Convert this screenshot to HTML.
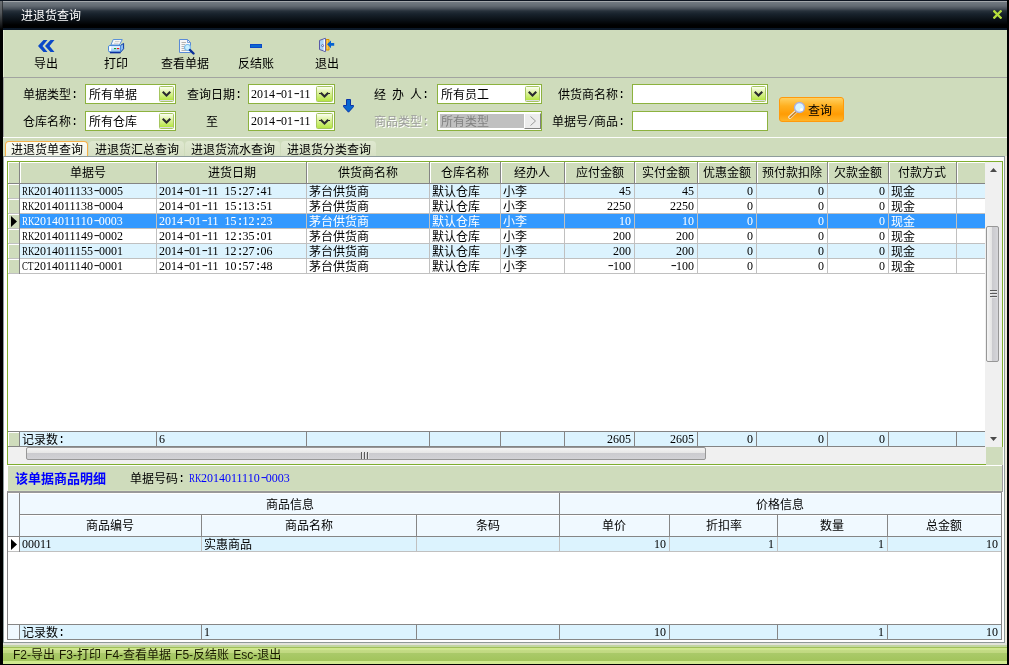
<!DOCTYPE html><html><head><meta charset="utf-8"><title>进退货查询</title><style>
html,body{margin:0;padding:0}
body{width:1009px;height:665px;overflow:hidden;background:#000;position:relative;font:12px/12px "Liberation Sans","Noto Sans CJK SC",sans-serif;color:#000}
div,span{box-sizing:border-box}
.a{position:absolute}
.m{font-family:"Liberation Mono","Noto Sans CJK SC",monospace;letter-spacing:-1.2px;position:relative;top:-1px}
.d{font-family:"Liberation Serif","Noto Sans CJK SC",serif;position:relative;top:-1px}
.c{display:inline-block;width:6px;height:12px;vertical-align:top;font-family:"Liberation Serif","Noto Sans CJK SC",serif;transform:scaleX(.74);transform-origin:0 50%;position:relative;top:-1px}
.h{display:inline-block;width:6px;height:12px;vertical-align:top;font-family:"Liberation Mono",monospace;letter-spacing:-1.2px;transform:scaleX(1.4);transform-origin:50% 50%;position:relative;top:-1px}
.t{position:absolute;white-space:nowrap;height:12px;line-height:12px}
.cb{position:absolute;height:20px;border:1px solid #8cb23e;background:#fff}
.dd{position:absolute;top:1px;right:1px;width:15px;height:16px;border:1px solid #a6c660;border-radius:1.5px;background:linear-gradient(#fbfef0,#dcf29c 6px,#b6e644 13px,#dcdce2 13px)}
.hl{position:absolute;height:1px}
.vl{position:absolute;width:1px}
</style></head><body><div class="a" style="left:0;top:0;width:1009px;height:665px;will-change:transform">
<div class="a" style="left:0;top:0;width:1009px;height:30px;background:linear-gradient(#0c1420 0,#0c1420 1px,#a2a6aa 1px,#a2a6aa 2px,#727a82 2px,#626a72 6px,#444c56 9px,#26303a 11px,#18222c 14px,#0a1016 20px,#000 25px,#000 28px,#0a1726 28px,#0b1828 30px)"></div>
<div class="a" style="left:0;top:1px;width:2px;height:29px;background:linear-gradient(#6c7074,#54585c 40%,#1c1e20 80%,#000)"></div><div class="a" style="left:2px;top:1px;width:1px;height:29px;background:linear-gradient(#3c4044,#202428 50%,#000)"></div>
<div class="a" style="left:1007px;top:0;width:2px;height:30px;background:#000"></div>
<div class="t" style="left:21px;top:10px;color:#fff">进退货查询</div>
<svg class="a" style="left:993px;top:10px" width="9" height="9" viewBox="0 0 9 9"><path d="M1.3 1.3 L7.7 7.7 M7.7 1.3 L1.3 7.7" stroke="#b6de3c" stroke-width="2.3" stroke-linecap="square"/></svg>
<div class="a" style="left:3px;top:30px;width:1004px;height:634px;background:#cfdcbc"></div>
<div class="a" style="left:3px;top:30px;width:1px;height:47px;background:#e2ead2"></div>
<div class="t" style="left:34px;top:58px">导出</div>
<svg class="a" style="left:38px;top:40px" width="17" height="12" viewBox="0 0 17 12"><path d="M0 6 L5.5 0 H9.5 L4.5 6 L9.5 12 H5.5Z M7 6 L12.5 0 H16.5 L11.5 6 L16.5 12 H12.5Z" fill="#0a48c8"/></svg>
<div class="t" style="left:104px;top:58px">打印</div>
<svg class="a" style="left:108px;top:39px" width="17" height="15" viewBox="0 0 17 15"><path d="M5.2 0.5 H14.3 L11.4 6 H2.9Z" fill="#f7f7f7" stroke="#5a90d8" stroke-width="1"/><path d="M7 2.5 H11.5 M6 4.3 H10.5" stroke="#c4c4c4" stroke-width="0.8"/><path d="M12.5 6.5 L15.6 4.4 V9.8 L12.5 13.3Z" fill="#8cbcf0" stroke="#0a3aa8" stroke-width="1"/><path d="M0.5 8 Q0.5 6.5 2 6.5 H12.5 V13 H2 Q0.5 13 0.5 11.5Z" fill="#a4ccf4" stroke="#4a88d8" stroke-width="1"/><path d="M1.2 7.2 H12 V9 H1.2Z" fill="#e2f0ff"/><path d="M1.2 9 H12 V10.4 H1.2Z" fill="#c4defa"/><rect x="1.2" y="7.4" width="1.8" height="4.6" fill="#fff"/><path d="M2 13.6 H12.6" stroke="#0a30a0" stroke-width="1.5"/><rect x="6" y="9" width="2.2" height="1.1" fill="#10a428"/><rect x="9" y="9" width="2.2" height="1.1" fill="#e81818"/></svg>
<div class="t" style="left:161px;top:58px">查看单据</div>
<svg class="a" style="left:179px;top:39px" width="16" height="16" viewBox="0 0 16 16"><path d="M0.5 0.5 H8.5 L11.5 3.5 V13.5 H0.5Z" fill="#f8f8f8" stroke="#5a8ad6"/><path d="M8.5 0.5 V3.5 H11.5" fill="none" stroke="#5a8ad6" stroke-width="0.8"/><path d="M2.5 3.5 H7 M2.5 5.5 H6 M2.5 7.5 H5 M2.5 9.5 H5 M2.5 11.5 H8" stroke="#b4b4b4" stroke-width="1"/><circle cx="8.5" cy="8.5" r="3" fill="#c8f0ff" stroke="#7ab8e8" stroke-width="1.2"/><path d="M11 11 L14.5 14.5" stroke="#0a3098" stroke-width="2.4" stroke-linecap="round"/></svg>
<div class="t" style="left:238px;top:58px">反结账</div>
<div class="a" style="left:250px;top:44px;width:12px;height:4px;background:#0a68d0;border:1px solid #0a48c8"></div>
<div class="t" style="left:315px;top:58px">退出</div>
<svg class="a" style="left:318px;top:37px" width="18" height="16" viewBox="0 0 18 16"><path d="M8 2.5 H11 V13 H8Z" fill="#f8c850" stroke="#d89000" stroke-width="1"/><path d="M1.5 3.4 L7.4 1.3 V14.6 L1.5 12.5Z" fill="#a8d4f8" stroke="#5858a8" stroke-width="1"/><path d="M6.3 2.2 V13.8" stroke="#fff" stroke-width="1.3"/><circle cx="4.6" cy="8.6" r="1" fill="#fff" stroke="#404088" stroke-width="0.7"/><path d="M9 7.3 L13 3.5 V6 H16.2 V8.8 H13 V11.2Z" fill="#0462d2"/></svg>
<div class="hl" style="left:3px;top:77px;width:1004px;background:#a2a4a0"></div>
<div class="vl" style="left:3px;top:77px;height:60px;background:#a2a4a0"></div>
<div class="hl" style="left:3px;top:137px;width:1004px;background:#fcfdfa"></div>
<div class="t" style="left:23px;top:89px;">单据类型<span class="m">:</span></div>
<div class="t" style="left:23px;top:116px;">仓库名称<span class="m">:</span></div>
<div class="t" style="left:187px;top:89px;">查询日期<span class="m">:</span></div>
<div class="t" style="left:206px;top:116px;">至</div>
<div class="t" style="left:374px;top:89px;">经<span class="m">&nbsp;</span>办<span class="m">&nbsp;</span>人<span class="m">:</span></div>
<div class="t" style="left:374px;top:116px;color:#9c9c9c;text-shadow:1px 1px 0 #fff">商品类型<span class="m">:</span></div>
<div class="t" style="left:558px;top:89px;">供货商名称<span class="m">:</span></div>
<div class="t" style="left:552px;top:116px;">单据号<span class="m">/</span>商品<span class="m">:</span></div>
<div class="cb" style="left:85px;top:84px;width:91px">
<div class="t" style="left:3px;top:4px">所有单据</div>
<div class="dd"><svg class="a" style="left:2px;top:4px" width="9" height="6" viewBox="0 0 9 6"><path d="M0 1.5 L1.5 0 L4.5 3 L7.5 0 L9 1.5 L4.5 6Z" fill="#2a2a30"/></svg></div>
</div>
<div class="cb" style="left:85px;top:111px;width:91px">
<div class="t" style="left:3px;top:4px">所有仓库</div>
<div class="dd"><svg class="a" style="left:2px;top:4px" width="9" height="6" viewBox="0 0 9 6"><path d="M0 1.5 L1.5 0 L4.5 3 L7.5 0 L9 1.5 L4.5 6Z" fill="#2a2a30"/></svg></div>
</div>
<div class="cb" style="left:248px;top:84px;width:87px">
<div class="t" style="left:2px;top:4px"><span class="d">2014</span><span class="h">-</span><span class="d">01</span><span class="h">-</span><span class="d">11</span></div>
<div class="dd" style="width:17px;background:linear-gradient(#fbfef0,#dcf29c 6px,#b6e644 14px)"><svg class="a" style="left:2px;top:5px" width="11" height="6" viewBox="0 0 11 6"><path d="M0 1 H1.5 L2.5 0 L5.5 3 L8.5 0 L9.5 1 H11 V2 H9.5 L5.5 6 L1.5 2 H0Z" fill="#2a2a30"/></svg></div>
</div>
<div class="cb" style="left:248px;top:111px;width:87px">
<div class="t" style="left:2px;top:4px"><span class="d">2014</span><span class="h">-</span><span class="d">01</span><span class="h">-</span><span class="d">11</span></div>
<div class="dd" style="width:17px;background:linear-gradient(#fbfef0,#dcf29c 6px,#b6e644 14px)"><svg class="a" style="left:2px;top:5px" width="11" height="6" viewBox="0 0 11 6"><path d="M0 1 H1.5 L2.5 0 L5.5 3 L8.5 0 L9.5 1 H11 V2 H9.5 L5.5 6 L1.5 2 H0Z" fill="#2a2a30"/></svg></div>
</div>
<div class="cb" style="left:437px;top:84px;width:105px">
<div class="t" style="left:3px;top:4px">所有员工</div>
<div class="dd"><svg class="a" style="left:2px;top:4px" width="9" height="6" viewBox="0 0 9 6"><path d="M0 1.5 L1.5 0 L4.5 3 L7.5 0 L9 1.5 L4.5 6Z" fill="#2a2a30"/></svg></div>
</div>
<div class="cb" style="left:632px;top:84px;width:136px">
<div class="dd"><svg class="a" style="left:2px;top:4px" width="9" height="6" viewBox="0 0 9 6"><path d="M0 1.5 L1.5 0 L4.5 3 L7.5 0 L9 1.5 L4.5 6Z" fill="#2a2a30"/></svg></div>
</div>
<div class="cb" style="left:632px;top:111px;width:136px">
</div>
<div class="cb" style="left:437px;top:111px;width:105px"><div class="a" style="left:2px;top:2px;width:85px;height:14px;background:#c0c0c0"></div><div class="t" style="left:3px;top:4px;color:#808080">所有类型</div><div class="a" style="left:86px;top:1px;width:17px;height:16px;background:#ececec;border:1px solid;border-color:#fff #808080 #808080 #fff"><svg class="a" style="left:4px;top:2px" width="8" height="10" viewBox="0 0 8 10"><path d="M1.5 0.5 L6.5 5 L1.5 9.5" stroke="#9a9a9a" stroke-width="1" fill="none"/></svg></div></div>
<svg class="a" style="left:343px;top:99px" width="11" height="14" viewBox="0 0 11 14"><path d="M3.5 0.5 H7.5 V6.5 H10.5 V7.7 L5.5 13.2 L0.5 7.7 V6.5 H3.5Z" fill="#0868d0" stroke="#0a34a8" stroke-width="1"/></svg>
<div class="a" style="left:779px;top:97px;width:65px;height:25px;border:1px solid #ff9a0c;border-radius:3px;background:linear-gradient(#ffd060,#ffb020 35%,#ff9c04 70%,#ffb428)"><svg class="a" style="left:8px;top:3px" width="18" height="18" viewBox="0 0 18 18"><path d="M8 10.5 L1.8 16.2" stroke="#f4ecd8" stroke-width="3.2" stroke-linecap="round"/><path d="M8 10.8 L2 16.3" stroke="#c8842c" stroke-width="1.6" stroke-linecap="round"/><circle cx="11.5" cy="6.5" r="5" fill="#d8f4ff" stroke="#a8b0e0" stroke-width="1.3"/><circle cx="13.5" cy="8.5" r="1.6" fill="#fff"/></svg><div class="t" style="left:28px;top:7px">查询</div></div>
<div class="a" style="left:5px;top:141px;width:83px;height:16px;border:1px solid #f6b04a;border-bottom:0;border-radius:4px 4px 0 0;background:linear-gradient(#fafcf4,#eef2e4)"></div>
<div class="t" style="left:11px;top:144px">进退货单查询</div>
<div class="a" style="left:89px;top:141px;width:95px;height:15px;border-radius:4px 4px 0 0;background:linear-gradient(#dfe8d0,#d6e0c4)"></div>
<div class="t" style="left:95px;top:144px">进退货汇总查询</div>
<div class="a" style="left:185px;top:141px;width:95px;height:15px;border-radius:4px 4px 0 0;background:linear-gradient(#dfe8d0,#d6e0c4)"></div>
<div class="t" style="left:191px;top:144px">进退货流水查询</div>
<div class="a" style="left:281px;top:141px;width:95px;height:15px;border-radius:4px 4px 0 0;background:linear-gradient(#dfe8d0,#d6e0c4)"></div>
<div class="t" style="left:287px;top:144px">进退货分类查询</div>
<div class="a" style="left:3px;top:156px;width:1002px;height:487px;background:#fff;border:1px solid #8e9c9c;border-bottom-color:#8e9898"></div>
<div class="a" style="left:1005px;top:156px;width:2px;height:487px;background:#ece8d8"></div>
<div class="a" style="left:3px;top:643px;width:1004px;height:2px;background:#e2e2da"></div>
<div class="a" style="left:3px;top:645px;width:1004px;height:2px;background:#c2d6a2"></div>
<div class="a" style="left:3px;top:647px;width:1004px;height:17px;background:linear-gradient(#a0c058 0,#a0c058 1px,#d0e890 1px,#cce48c 3px,#c4dc86 3px,#c0d880 6px,#aaca6a 6px,#a2c45c 14px,#d0ea90 14px,#d0ea90 17px)"></div>
<div class="t" style="left:13px;top:649px;word-spacing:0.7px;font-family:'Liberation Sans','Noto Sans CJK SC',sans-serif;color:#1a1a00">F2-导出 F3-打印 F4-查看单据 F5-反结账 Esc-退出</div>
<div class="a" style="left:7px;top:161px;width:996px;height:304px;border:1px solid #7fae2e;background:#fff"></div>
<div class="a" style="left:8px;top:162px;width:977px;height:21px;background:#cfdcbc"></div>
<div class="hl" style="left:8px;top:162px;width:977px;background:#fff"></div>
<div class="hl" style="left:8px;top:183px;width:977px;background:#848484"></div>
<div class="vl" style="left:8px;top:162px;height:21px;background:#fff"></div>
<div class="vl" style="left:20px;top:162px;height:21px;background:#fff"></div>
<div class="vl" style="left:157px;top:162px;height:21px;background:#fff"></div>
<div class="vl" style="left:307px;top:162px;height:21px;background:#fff"></div>
<div class="vl" style="left:430px;top:162px;height:21px;background:#fff"></div>
<div class="vl" style="left:501px;top:162px;height:21px;background:#fff"></div>
<div class="vl" style="left:565px;top:162px;height:21px;background:#fff"></div>
<div class="vl" style="left:635px;top:162px;height:21px;background:#fff"></div>
<div class="vl" style="left:698px;top:162px;height:21px;background:#fff"></div>
<div class="vl" style="left:757px;top:162px;height:21px;background:#fff"></div>
<div class="vl" style="left:828px;top:162px;height:21px;background:#fff"></div>
<div class="vl" style="left:889px;top:162px;height:21px;background:#fff"></div>
<div class="vl" style="left:957px;top:162px;height:21px;background:#fff"></div>
<div class="vl" style="left:19px;top:162px;height:22px;background:#848484"></div>
<div class="vl" style="left:156px;top:162px;height:22px;background:#848484"></div>
<div class="vl" style="left:306px;top:162px;height:22px;background:#848484"></div>
<div class="vl" style="left:429px;top:162px;height:22px;background:#848484"></div>
<div class="vl" style="left:500px;top:162px;height:22px;background:#848484"></div>
<div class="vl" style="left:564px;top:162px;height:22px;background:#848484"></div>
<div class="vl" style="left:634px;top:162px;height:22px;background:#848484"></div>
<div class="vl" style="left:697px;top:162px;height:22px;background:#848484"></div>
<div class="vl" style="left:756px;top:162px;height:22px;background:#848484"></div>
<div class="vl" style="left:827px;top:162px;height:22px;background:#848484"></div>
<div class="vl" style="left:888px;top:162px;height:22px;background:#848484"></div>
<div class="vl" style="left:956px;top:162px;height:22px;background:#848484"></div>
<div class="t" style="left:70px;top:167px">单据号</div>
<div class="t" style="left:208px;top:167px">进货日期</div>
<div class="t" style="left:338px;top:167px">供货商名称</div>
<div class="t" style="left:441px;top:167px">仓库名称</div>
<div class="t" style="left:514px;top:167px">经办人</div>
<div class="t" style="left:576px;top:167px">应付金额</div>
<div class="t" style="left:642px;top:167px">实付金额</div>
<div class="t" style="left:703px;top:167px">优惠金额</div>
<div class="t" style="left:762px;top:167px">预付款扣除</div>
<div class="t" style="left:834px;top:167px">欠款金额</div>
<div class="t" style="left:898px;top:167px">付款方式</div>
<div class="a" style="left:8px;top:184px;width:11px;height:14px;background:#cfdcbc;border-top:1px solid #fff;border-left:1px solid #fff"></div>
<div class="a" style="left:20px;top:184px;width:965px;height:14px;background:#dcf3fe"></div>
<div class="hl" style="left:8px;top:198px;width:977px;background:#c0c0c0"></div>
<div class="vl" style="left:19px;top:184px;height:15px;background:#848484"></div>
<div class="vl" style="left:156px;top:184px;height:15px;background:#c0c0c0"></div>
<div class="vl" style="left:306px;top:184px;height:15px;background:#c0c0c0"></div>
<div class="vl" style="left:429px;top:184px;height:15px;background:#c0c0c0"></div>
<div class="vl" style="left:500px;top:184px;height:15px;background:#c0c0c0"></div>
<div class="vl" style="left:564px;top:184px;height:15px;background:#c0c0c0"></div>
<div class="vl" style="left:634px;top:184px;height:15px;background:#c0c0c0"></div>
<div class="vl" style="left:697px;top:184px;height:15px;background:#c0c0c0"></div>
<div class="vl" style="left:756px;top:184px;height:15px;background:#c0c0c0"></div>
<div class="vl" style="left:827px;top:184px;height:15px;background:#c0c0c0"></div>
<div class="vl" style="left:888px;top:184px;height:15px;background:#c0c0c0"></div>
<div class="vl" style="left:956px;top:184px;height:15px;background:#c0c0c0"></div>
<div class="t" style="left:22px;top:186px;color:#000"><span class="c">R</span><span class="c">K</span><span class="d">2014011133</span><span class="h">-</span><span class="d">0005</span></div>
<div class="t" style="left:159px;top:186px;color:#000"><span class="d">2014</span><span class="h">-</span><span class="d">01</span><span class="h">-</span><span class="d">11</span><span class="m">&nbsp;</span><span class="d">15</span><span class="m">:</span><span class="d">27</span><span class="m">:</span><span class="d">41</span></div>
<div class="t" style="left:309px;top:186px;color:#000">茅台供货商</div>
<div class="t" style="left:432px;top:186px;color:#000">默认仓库</div>
<div class="t" style="left:503px;top:186px;color:#000">小李</div>
<div class="t" style="right:378px;top:186px;color:#000"><span class="d">45</span></div>
<div class="t" style="right:315px;top:186px;color:#000"><span class="d">45</span></div>
<div class="t" style="right:256px;top:186px;color:#000"><span class="d">0</span></div>
<div class="t" style="right:185px;top:186px;color:#000"><span class="d">0</span></div>
<div class="t" style="right:124px;top:186px;color:#000"><span class="d">0</span></div>
<div class="t" style="left:891px;top:186px;color:#000">现金</div>
<div class="a" style="left:8px;top:199px;width:11px;height:14px;background:#cfdcbc;border-top:1px solid #fff;border-left:1px solid #fff"></div>
<div class="a" style="left:20px;top:199px;width:965px;height:14px;background:#fff"></div>
<div class="hl" style="left:8px;top:213px;width:977px;background:#c0c0c0"></div>
<div class="vl" style="left:19px;top:199px;height:15px;background:#848484"></div>
<div class="vl" style="left:156px;top:199px;height:15px;background:#c0c0c0"></div>
<div class="vl" style="left:306px;top:199px;height:15px;background:#c0c0c0"></div>
<div class="vl" style="left:429px;top:199px;height:15px;background:#c0c0c0"></div>
<div class="vl" style="left:500px;top:199px;height:15px;background:#c0c0c0"></div>
<div class="vl" style="left:564px;top:199px;height:15px;background:#c0c0c0"></div>
<div class="vl" style="left:634px;top:199px;height:15px;background:#c0c0c0"></div>
<div class="vl" style="left:697px;top:199px;height:15px;background:#c0c0c0"></div>
<div class="vl" style="left:756px;top:199px;height:15px;background:#c0c0c0"></div>
<div class="vl" style="left:827px;top:199px;height:15px;background:#c0c0c0"></div>
<div class="vl" style="left:888px;top:199px;height:15px;background:#c0c0c0"></div>
<div class="vl" style="left:956px;top:199px;height:15px;background:#c0c0c0"></div>
<div class="t" style="left:22px;top:201px;color:#000"><span class="c">R</span><span class="c">K</span><span class="d">2014011138</span><span class="h">-</span><span class="d">0004</span></div>
<div class="t" style="left:159px;top:201px;color:#000"><span class="d">2014</span><span class="h">-</span><span class="d">01</span><span class="h">-</span><span class="d">11</span><span class="m">&nbsp;</span><span class="d">15</span><span class="m">:</span><span class="d">13</span><span class="m">:</span><span class="d">51</span></div>
<div class="t" style="left:309px;top:201px;color:#000">茅台供货商</div>
<div class="t" style="left:432px;top:201px;color:#000">默认仓库</div>
<div class="t" style="left:503px;top:201px;color:#000">小李</div>
<div class="t" style="right:378px;top:201px;color:#000"><span class="d">2250</span></div>
<div class="t" style="right:315px;top:201px;color:#000"><span class="d">2250</span></div>
<div class="t" style="right:256px;top:201px;color:#000"><span class="d">0</span></div>
<div class="t" style="right:185px;top:201px;color:#000"><span class="d">0</span></div>
<div class="t" style="right:124px;top:201px;color:#000"><span class="d">0</span></div>
<div class="t" style="left:891px;top:201px;color:#000">现金</div>
<div class="a" style="left:8px;top:214px;width:11px;height:14px;background:#cfdcbc;border-top:1px solid #fff;border-left:1px solid #fff"></div>
<svg class="a" style="left:11px;top:216px" width="7" height="11" viewBox="0 0 7 11"><path d="M0 0 L6 5.5 L0 11Z" fill="#000"/></svg>
<div class="a" style="left:20px;top:214px;width:965px;height:14px;background:#3399ff"></div>
<div class="hl" style="left:8px;top:228px;width:977px;background:#c0c0c0"></div>
<div class="vl" style="left:19px;top:214px;height:15px;background:#848484"></div>
<div class="vl" style="left:156px;top:214px;height:15px;background:#c0c0c0"></div>
<div class="vl" style="left:306px;top:214px;height:15px;background:#c0c0c0"></div>
<div class="vl" style="left:429px;top:214px;height:15px;background:#c0c0c0"></div>
<div class="vl" style="left:500px;top:214px;height:15px;background:#c0c0c0"></div>
<div class="vl" style="left:564px;top:214px;height:15px;background:#c0c0c0"></div>
<div class="vl" style="left:634px;top:214px;height:15px;background:#c0c0c0"></div>
<div class="vl" style="left:697px;top:214px;height:15px;background:#c0c0c0"></div>
<div class="vl" style="left:756px;top:214px;height:15px;background:#c0c0c0"></div>
<div class="vl" style="left:827px;top:214px;height:15px;background:#c0c0c0"></div>
<div class="vl" style="left:888px;top:214px;height:15px;background:#c0c0c0"></div>
<div class="vl" style="left:956px;top:214px;height:15px;background:#c0c0c0"></div>
<div class="t" style="left:22px;top:216px;color:#fff"><span class="c">R</span><span class="c">K</span><span class="d">2014011110</span><span class="h">-</span><span class="d">0003</span></div>
<div class="t" style="left:159px;top:216px;color:#fff"><span class="d">2014</span><span class="h">-</span><span class="d">01</span><span class="h">-</span><span class="d">11</span><span class="m">&nbsp;</span><span class="d">15</span><span class="m">:</span><span class="d">12</span><span class="m">:</span><span class="d">23</span></div>
<div class="t" style="left:309px;top:216px;color:#fff">茅台供货商</div>
<div class="t" style="left:432px;top:216px;color:#fff">默认仓库</div>
<div class="t" style="left:503px;top:216px;color:#fff">小李</div>
<div class="t" style="right:378px;top:216px;color:#fff"><span class="d">10</span></div>
<div class="t" style="right:315px;top:216px;color:#fff"><span class="d">10</span></div>
<div class="t" style="right:256px;top:216px;color:#fff"><span class="d">0</span></div>
<div class="t" style="right:185px;top:216px;color:#fff"><span class="d">0</span></div>
<div class="t" style="right:124px;top:216px;color:#fff"><span class="d">0</span></div>
<div class="t" style="left:891px;top:216px;color:#fff">现金</div>
<div class="a" style="left:8px;top:229px;width:11px;height:14px;background:#cfdcbc;border-top:1px solid #fff;border-left:1px solid #fff"></div>
<div class="a" style="left:20px;top:229px;width:965px;height:14px;background:#fff"></div>
<div class="hl" style="left:8px;top:243px;width:977px;background:#c0c0c0"></div>
<div class="vl" style="left:19px;top:229px;height:15px;background:#848484"></div>
<div class="vl" style="left:156px;top:229px;height:15px;background:#c0c0c0"></div>
<div class="vl" style="left:306px;top:229px;height:15px;background:#c0c0c0"></div>
<div class="vl" style="left:429px;top:229px;height:15px;background:#c0c0c0"></div>
<div class="vl" style="left:500px;top:229px;height:15px;background:#c0c0c0"></div>
<div class="vl" style="left:564px;top:229px;height:15px;background:#c0c0c0"></div>
<div class="vl" style="left:634px;top:229px;height:15px;background:#c0c0c0"></div>
<div class="vl" style="left:697px;top:229px;height:15px;background:#c0c0c0"></div>
<div class="vl" style="left:756px;top:229px;height:15px;background:#c0c0c0"></div>
<div class="vl" style="left:827px;top:229px;height:15px;background:#c0c0c0"></div>
<div class="vl" style="left:888px;top:229px;height:15px;background:#c0c0c0"></div>
<div class="vl" style="left:956px;top:229px;height:15px;background:#c0c0c0"></div>
<div class="t" style="left:22px;top:231px;color:#000"><span class="c">R</span><span class="c">K</span><span class="d">2014011149</span><span class="h">-</span><span class="d">0002</span></div>
<div class="t" style="left:159px;top:231px;color:#000"><span class="d">2014</span><span class="h">-</span><span class="d">01</span><span class="h">-</span><span class="d">11</span><span class="m">&nbsp;</span><span class="d">12</span><span class="m">:</span><span class="d">35</span><span class="m">:</span><span class="d">01</span></div>
<div class="t" style="left:309px;top:231px;color:#000">茅台供货商</div>
<div class="t" style="left:432px;top:231px;color:#000">默认仓库</div>
<div class="t" style="left:503px;top:231px;color:#000">小李</div>
<div class="t" style="right:378px;top:231px;color:#000"><span class="d">200</span></div>
<div class="t" style="right:315px;top:231px;color:#000"><span class="d">200</span></div>
<div class="t" style="right:256px;top:231px;color:#000"><span class="d">0</span></div>
<div class="t" style="right:185px;top:231px;color:#000"><span class="d">0</span></div>
<div class="t" style="right:124px;top:231px;color:#000"><span class="d">0</span></div>
<div class="t" style="left:891px;top:231px;color:#000">现金</div>
<div class="a" style="left:8px;top:244px;width:11px;height:14px;background:#cfdcbc;border-top:1px solid #fff;border-left:1px solid #fff"></div>
<div class="a" style="left:20px;top:244px;width:965px;height:14px;background:#dcf3fe"></div>
<div class="hl" style="left:8px;top:258px;width:977px;background:#c0c0c0"></div>
<div class="vl" style="left:19px;top:244px;height:15px;background:#848484"></div>
<div class="vl" style="left:156px;top:244px;height:15px;background:#c0c0c0"></div>
<div class="vl" style="left:306px;top:244px;height:15px;background:#c0c0c0"></div>
<div class="vl" style="left:429px;top:244px;height:15px;background:#c0c0c0"></div>
<div class="vl" style="left:500px;top:244px;height:15px;background:#c0c0c0"></div>
<div class="vl" style="left:564px;top:244px;height:15px;background:#c0c0c0"></div>
<div class="vl" style="left:634px;top:244px;height:15px;background:#c0c0c0"></div>
<div class="vl" style="left:697px;top:244px;height:15px;background:#c0c0c0"></div>
<div class="vl" style="left:756px;top:244px;height:15px;background:#c0c0c0"></div>
<div class="vl" style="left:827px;top:244px;height:15px;background:#c0c0c0"></div>
<div class="vl" style="left:888px;top:244px;height:15px;background:#c0c0c0"></div>
<div class="vl" style="left:956px;top:244px;height:15px;background:#c0c0c0"></div>
<div class="t" style="left:22px;top:246px;color:#000"><span class="c">R</span><span class="c">K</span><span class="d">2014011155</span><span class="h">-</span><span class="d">0001</span></div>
<div class="t" style="left:159px;top:246px;color:#000"><span class="d">2014</span><span class="h">-</span><span class="d">01</span><span class="h">-</span><span class="d">11</span><span class="m">&nbsp;</span><span class="d">12</span><span class="m">:</span><span class="d">27</span><span class="m">:</span><span class="d">06</span></div>
<div class="t" style="left:309px;top:246px;color:#000">茅台供货商</div>
<div class="t" style="left:432px;top:246px;color:#000">默认仓库</div>
<div class="t" style="left:503px;top:246px;color:#000">小李</div>
<div class="t" style="right:378px;top:246px;color:#000"><span class="d">200</span></div>
<div class="t" style="right:315px;top:246px;color:#000"><span class="d">200</span></div>
<div class="t" style="right:256px;top:246px;color:#000"><span class="d">0</span></div>
<div class="t" style="right:185px;top:246px;color:#000"><span class="d">0</span></div>
<div class="t" style="right:124px;top:246px;color:#000"><span class="d">0</span></div>
<div class="t" style="left:891px;top:246px;color:#000">现金</div>
<div class="a" style="left:8px;top:259px;width:11px;height:14px;background:#cfdcbc;border-top:1px solid #fff;border-left:1px solid #fff"></div>
<div class="a" style="left:20px;top:259px;width:965px;height:14px;background:#fff"></div>
<div class="hl" style="left:8px;top:273px;width:977px;background:#c0c0c0"></div>
<div class="vl" style="left:19px;top:259px;height:15px;background:#848484"></div>
<div class="vl" style="left:156px;top:259px;height:15px;background:#c0c0c0"></div>
<div class="vl" style="left:306px;top:259px;height:15px;background:#c0c0c0"></div>
<div class="vl" style="left:429px;top:259px;height:15px;background:#c0c0c0"></div>
<div class="vl" style="left:500px;top:259px;height:15px;background:#c0c0c0"></div>
<div class="vl" style="left:564px;top:259px;height:15px;background:#c0c0c0"></div>
<div class="vl" style="left:634px;top:259px;height:15px;background:#c0c0c0"></div>
<div class="vl" style="left:697px;top:259px;height:15px;background:#c0c0c0"></div>
<div class="vl" style="left:756px;top:259px;height:15px;background:#c0c0c0"></div>
<div class="vl" style="left:827px;top:259px;height:15px;background:#c0c0c0"></div>
<div class="vl" style="left:888px;top:259px;height:15px;background:#c0c0c0"></div>
<div class="vl" style="left:956px;top:259px;height:15px;background:#c0c0c0"></div>
<div class="t" style="left:22px;top:261px;color:#000"><span class="c">C</span><span class="c">T</span><span class="d">2014011140</span><span class="h">-</span><span class="d">0001</span></div>
<div class="t" style="left:159px;top:261px;color:#000"><span class="d">2014</span><span class="h">-</span><span class="d">01</span><span class="h">-</span><span class="d">11</span><span class="m">&nbsp;</span><span class="d">10</span><span class="m">:</span><span class="d">57</span><span class="m">:</span><span class="d">48</span></div>
<div class="t" style="left:309px;top:261px;color:#000">茅台供货商</div>
<div class="t" style="left:432px;top:261px;color:#000">默认仓库</div>
<div class="t" style="left:503px;top:261px;color:#000">小李</div>
<div class="t" style="right:378px;top:261px;color:#000"><span class="h">-</span><span class="d">100</span></div>
<div class="t" style="right:315px;top:261px;color:#000"><span class="h">-</span><span class="d">100</span></div>
<div class="t" style="right:256px;top:261px;color:#000"><span class="d">0</span></div>
<div class="t" style="right:185px;top:261px;color:#000"><span class="d">0</span></div>
<div class="t" style="right:124px;top:261px;color:#000"><span class="d">0</span></div>
<div class="t" style="left:891px;top:261px;color:#000">现金</div>
<div class="hl" style="left:8px;top:431px;width:977px;background:#848484"></div>
<div class="a" style="left:8px;top:432px;width:11px;height:14px;background:#cfdcbc;border-top:1px solid #fff;border-left:1px solid #fff"></div>
<div class="a" style="left:20px;top:432px;width:965px;height:14px;background:#dcf3fe"></div>
<div class="hl" style="left:8px;top:446px;width:977px;background:#848484"></div>
<div class="vl" style="left:19px;top:432px;height:15px;background:#848484"></div>
<div class="vl" style="left:156px;top:432px;height:15px;background:#848484"></div>
<div class="vl" style="left:306px;top:432px;height:15px;background:#848484"></div>
<div class="vl" style="left:429px;top:432px;height:15px;background:#848484"></div>
<div class="vl" style="left:500px;top:432px;height:15px;background:#848484"></div>
<div class="vl" style="left:564px;top:432px;height:15px;background:#848484"></div>
<div class="vl" style="left:634px;top:432px;height:15px;background:#848484"></div>
<div class="vl" style="left:697px;top:432px;height:15px;background:#848484"></div>
<div class="vl" style="left:756px;top:432px;height:15px;background:#848484"></div>
<div class="vl" style="left:827px;top:432px;height:15px;background:#848484"></div>
<div class="vl" style="left:888px;top:432px;height:15px;background:#848484"></div>
<div class="vl" style="left:956px;top:432px;height:15px;background:#848484"></div>
<div class="t" style="left:22px;top:434px;color:#000">记录数<span class="m">:</span></div>
<div class="t" style="left:159px;top:434px;color:#000"><span class="d">6</span></div>
<div class="t" style="right:378px;top:434px;color:#000"><span class="d">2605</span></div>
<div class="t" style="right:315px;top:434px;color:#000"><span class="d">2605</span></div>
<div class="t" style="right:256px;top:434px;color:#000"><span class="d">0</span></div>
<div class="t" style="right:185px;top:434px;color:#000"><span class="d">0</span></div>
<div class="t" style="right:124px;top:434px;color:#000"><span class="d">0</span></div>
<div class="a" style="left:985px;top:162px;width:17px;height:285px;background:#f0f0f0"></div>
<svg class="a" style="left:990px;top:168px" width="7" height="4" viewBox="0 0 7 4"><path d="M0 4 L3.5 0 L7 4Z" fill="#4a4a4a"/></svg>
<svg class="a" style="left:990px;top:437px" width="7" height="4" viewBox="0 0 7 4"><path d="M0 0 L3.5 4 L7 0Z" fill="#4a4a4a"/></svg>
<div class="a" style="left:986px;top:226px;width:13px;height:136px;border:1px solid #979797;border-radius:2px;background:linear-gradient(90deg,#f4f4f4,#e4e4e4 45%,#cbcbcf 50%,#d6d6da)"></div>
<div class="a" style="left:990px;top:290px;width:7px;height:1px;background:#5a5a5a;box-shadow:0 3px 0 #5a5a5a,0 6px 0 #5a5a5a,0 1px 0 #e8e8e8,0 4px 0 #e8e8e8,0 7px 0 #e8e8e8"></div>
<div class="a" style="left:8px;top:447px;width:978px;height:17px;background:#f0f0f0"></div>
<div class="a" style="left:26px;top:447px;width:680px;height:13px;border:1px solid #979797;border-radius:2px;background:linear-gradient(#f4f4f4,#e6e6e6 45%,#cbcbcf 50%,#d2d2d6)"></div>
<div class="a" style="left:361px;top:452px;width:1px;height:7px;background:#5a5a5a;box-shadow:3px 0 0 #5a5a5a,6px 0 0 #5a5a5a,1px 0 0 #e8e8e8,4px 0 0 #e8e8e8,7px 0 0 #e8e8e8"></div>
<div class="a" style="left:986px;top:447px;width:17px;height:18px;background:#cfdcbc"></div>
<div class="a" style="left:8px;top:466px;width:994px;height:25px;background:#cfdcbc"></div>
<div class="vl" style="left:1002px;top:465px;height:27px;background:#9c9c9c"></div>
<div class="hl" style="left:8px;top:490px;width:994px;background:#d6e2c2"></div>
<div class="hl" style="left:7px;top:491px;width:996px;background:#9a9a9a"></div>
<div class="t" style="left:15px;top:473px;color:#0000ff;font-weight:bold;font-size:13px">该单据商品明细</div>
<div class="t" style="left:130px;top:473px;">单据号码<span class="m">:</span></div>
<div class="t" style="left:189px;top:473px;color:#0000ff"><span class="c">R</span><span class="c">K</span><span class="d">2014011110</span><span class="h">-</span><span class="d">0003</span></div>
<div class="a" style="left:7px;top:492px;width:995px;height:148px;background:#fff;border:1px solid #868686;border-top-color:#9a9a9a"></div>
<div class="a" style="left:8px;top:493px;width:993px;height:43px;background:#f0f9ff"></div>
<div class="hl" style="left:8px;top:493px;width:993px;background:#fff"></div>
<div class="hl" style="left:20px;top:514px;width:981px;background:#868686"></div>
<div class="hl" style="left:20px;top:515px;width:981px;background:#fff"></div>
<div class="hl" style="left:8px;top:536px;width:993px;background:#868686"></div>
<div class="vl" style="left:19px;top:493px;height:44px;background:#868686"></div>
<div class="vl" style="left:559px;top:493px;height:44px;background:#868686"></div>
<div class="vl" style="left:201px;top:515px;height:22px;background:#868686"></div>
<div class="vl" style="left:416px;top:515px;height:22px;background:#868686"></div>
<div class="vl" style="left:559px;top:515px;height:22px;background:#868686"></div>
<div class="vl" style="left:669px;top:515px;height:22px;background:#868686"></div>
<div class="vl" style="left:777px;top:515px;height:22px;background:#868686"></div>
<div class="vl" style="left:887px;top:515px;height:22px;background:#868686"></div>
<div class="t" style="left:266px;top:499px">商品信息</div>
<div class="t" style="left:756px;top:499px">价格信息</div>
<div class="t" style="left:86px;top:520px">商品编号</div>
<div class="t" style="left:285px;top:520px">商品名称</div>
<div class="t" style="left:476px;top:520px">条码</div>
<div class="t" style="left:602px;top:520px">单价</div>
<div class="t" style="left:706px;top:520px">折扣率</div>
<div class="t" style="left:820px;top:520px">数量</div>
<div class="t" style="left:926px;top:520px">总金额</div>
<div class="a" style="left:8px;top:537px;width:11px;height:14px;background:#fff"></div>
<svg class="a" style="left:11px;top:539px" width="7" height="11" viewBox="0 0 7 11"><path d="M0 0 L6 5.5 L0 11Z" fill="#000"/></svg>
<div class="a" style="left:20px;top:537px;width:981px;height:14px;background:#dcf3fe"></div>
<div class="hl" style="left:8px;top:551px;width:993px;background:#c0c0c0"></div>
<div class="vl" style="left:19px;top:537px;height:15px;background:#868686"></div>
<div class="vl" style="left:201px;top:537px;height:15px;background:#c0c0c0"></div>
<div class="vl" style="left:416px;top:537px;height:15px;background:#c0c0c0"></div>
<div class="vl" style="left:559px;top:537px;height:15px;background:#c0c0c0"></div>
<div class="vl" style="left:669px;top:537px;height:15px;background:#c0c0c0"></div>
<div class="vl" style="left:777px;top:537px;height:15px;background:#c0c0c0"></div>
<div class="vl" style="left:887px;top:537px;height:15px;background:#c0c0c0"></div>
<div class="t" style="left:22px;top:539px"><span class="d">00011</span></div>
<div class="t" style="left:204px;top:539px">实惠商品</div>
<div class="t" style="right:343px;top:539px"><span class="d">10</span></div>
<div class="t" style="right:235px;top:539px"><span class="d">1</span></div>
<div class="t" style="right:125px;top:539px"><span class="d">1</span></div>
<div class="t" style="right:11px;top:539px"><span class="d">10</span></div>
<div class="hl" style="left:8px;top:624px;width:993px;background:#868686"></div>
<div class="a" style="left:8px;top:625px;width:11px;height:14px;background:#f0f9ff"></div>
<div class="a" style="left:20px;top:625px;width:981px;height:14px;background:#dcf3fe"></div>
<div class="hl" style="left:8px;top:639px;width:993px;background:#868686"></div>
<div class="vl" style="left:19px;top:625px;height:15px;background:#868686"></div>
<div class="vl" style="left:201px;top:625px;height:15px;background:#868686"></div>
<div class="vl" style="left:416px;top:625px;height:15px;background:#868686"></div>
<div class="vl" style="left:559px;top:625px;height:15px;background:#868686"></div>
<div class="vl" style="left:669px;top:625px;height:15px;background:#868686"></div>
<div class="vl" style="left:777px;top:625px;height:15px;background:#868686"></div>
<div class="vl" style="left:887px;top:625px;height:15px;background:#868686"></div>
<div class="t" style="left:22px;top:627px">记录数<span class="m">:</span></div>
<div class="t" style="left:204px;top:627px"><span class="d">1</span></div>
<div class="t" style="right:343px;top:627px"><span class="d">10</span></div>
<div class="t" style="right:125px;top:627px"><span class="d">1</span></div>
<div class="t" style="right:11px;top:627px"><span class="d">10</span></div>
</div></body></html>
